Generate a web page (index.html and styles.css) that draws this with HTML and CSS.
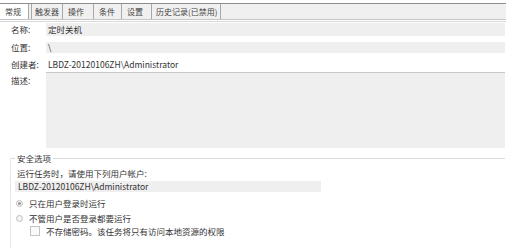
FILE: index.html
```html
<!DOCTYPE html>
<html lang="zh-cn">
<head>
    <meta charset="UTF-8">
    <title>任务属性</title>
    <link rel="stylesheet" href="styles.css">
</head>
<body>
    <div class="tabs">
        <span class="tab active">常规</span>
        <span class="tab">触发器</span>
        <span class="tab">操作</span>
        <span class="tab">条件</span>
        <span class="tab">设置</span>
        <span class="tab">历史记录(已禁用)</span>
    </div>

    <div class="form">
        <div class="row row-name">
            <span class="label">名称:</span>
            <span class="field">定时关机</span>
        </div>
        <div class="row row-loc">
            <span class="label">位置:</span>
            <span class="field">\</span>
        </div>
        <div class="row row-author">
            <span class="label">创建者:</span>
            <span class="plain">LBDZ-20120106ZH\Administrator</span>
        </div>
        <div class="row row-desc">
            <span class="label">描述:</span>
            <span class="field"></span>
        </div>
    </div>

    <div class="group">
        <div class="legend">安全选项</div>
        <p class="hint">运行任务时，请使用下列用户帐户:</p>
        <div class="account">LBDZ-20120106ZH\Administrator</div>
        <div class="option first"><span class="radio checked"></span>只在用户登录时运行</div>
        <div class="option second"><span class="radio"></span>不管用户是否登录都要运行</div>
        <div class="option sub"><span class="check"></span>不存储密码。该任务将只有访问本地资源的权限</div>
    </div>
</body>
</html>
```

FILE: styles.css
```css
* {
    box-sizing: border-box;
}
body {
    font-family: "Noto Sans CJK SC", "DejaVu Sans", sans-serif;
    font-size: 8.5px;
    color: #333;
    background-color: #fff;
    margin: 0;
    padding: 0;
}
.tabs {
    margin-top: 3px;
    width: 506px;
    height: 17px;
    display: flex;
    background-color: #f0f0f0;
    border-top: 1px solid #8c8c8c;
    border-bottom: 1px solid #c4c4c4;
    box-shadow: 0 1px 0 #fff, 0 2px 0 #d8d8d8;
}
.tab {
    flex: none;
    font-size: 8px;
    line-height: 15px;
    padding: 0 3px 0 5px;
    white-space: nowrap;
    border-right: 1px solid #a8a8a8;
    color: #444;
}
.tab:nth-child(1) { min-width: 29px; background-color: #fff; margin-right: 2px; }
.tab:nth-child(2) { min-width: 32px; padding-left: 3px; border-left: 1px solid #a8a8a8; }
.tab:nth-child(3) { min-width: 31px; }
.tab:nth-child(4) { min-width: 28px; }
.tab:nth-child(5) { min-width: 30px; }
.tab:nth-child(6) { min-width: 63px; padding-left: 4px; }
.form {
    margin-top: 3px;
    width: 505px;
}
.row {
    display: flex;
}
.label {
    width: 46px;
    flex: none;
    padding-left: 11px;
    white-space: nowrap;
}
.field {
    flex: 1;
    background-color: #efefef;
    padding-left: 2px;
}
.plain {
    flex: 1;
    padding-left: 2px;
    border-bottom: 1px solid #c8c8c8;
}
.row-name {
    height: 13px;
    line-height: 13px;
}
.row-loc {
    margin-top: 6px;
    height: 11px;
    line-height: 11px;
}
.row-author {
    margin-top: 5px;
    height: 15px;
    line-height: 13px;
}
.row-desc {
    height: 75px;
    line-height: 14px;
}
.group {
    margin: 10px 0 0 10px;
    width: 495px;
    height: 90px;
    border-top: 1px solid #dcdcdc;
    border-left: 1px solid #e6e6e6;
    position: relative;
}
.legend {
    position: absolute;
    top: -7px;
    left: 4px;
    padding: 0 2px;
    background-color: #fff;
    line-height: 12px;
}
.hint {
    margin: 8px 0 0 6px;
    line-height: 12px;
}
.account {
    margin: 2px 0 0 4px;
    width: 306px;
    padding-left: 3px;
    line-height: 11px;
    background-color: #efefef;
}
.option {
    display: flex;
    align-items: center;
    margin-left: 5px;
    line-height: 12px;
    gap: 6px;
}
.first {
    margin-top: 5px;
}
.second {
    margin-top: 3px;
}
.sub {
    margin-left: 19px;
    margin-top: 1px;
}
.radio {
    width: 7px;
    height: 7px;
    border-radius: 50%;
    border: 1px solid #c0c0c0;
    background-color: #f4f4f4;
    position: relative;
}
.radio.checked::after {
    content: "";
    position: absolute;
    left: 1px;
    top: 1px;
    width: 3px;
    height: 3px;
    border-radius: 50%;
    background-color: #999;
}
.check {
    width: 10px;
    height: 10px;
    border: 1px solid #c4c4c4;
    background-color: #fafafa;
}
```
